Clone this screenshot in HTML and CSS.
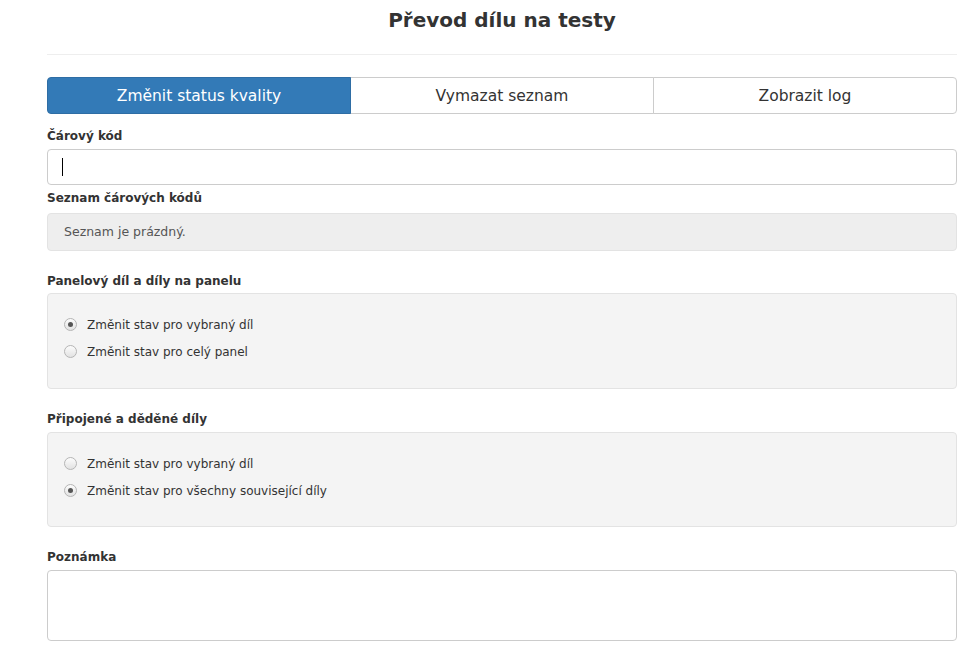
FILE: index.html
```html
<!DOCTYPE html>
<html lang="cs">
<head>
<meta charset="utf-8">
<link rel="stylesheet" href="styles.css">
</head>
<body>
<div class="page">
  <h1 class="title">Převod dílu na testy</h1>
  <hr class="rule">
  <div class="btn-group">
    <button class="btn btn-primary">Změnit status kvality</button>
    <button class="btn">Vymazat seznam</button>
    <button class="btn">Zobrazit log</button>
  </div>
  <label class="lbl lbl-first">Čárový kód</label>
  <div class="input"><span class="caret"></span></div>
  <label class="lbl lbl-tight">Seznam čárových kódů</label>
  <div class="empty">Seznam je prázdný.</div>
  <label class="lbl lbl-section lbl-section-1">Panelový díl a díly na panelu</label>
  <div class="panel panel-1">
    <div class="radio"><span class="dot checked"></span>Změnit stav pro vybraný díl</div>
    <div class="radio"><span class="dot"></span>Změnit stav pro celý panel</div>
  </div>
  <label class="lbl lbl-section">Připojené a děděné díly</label>
  <div class="panel">
    <div class="radio"><span class="dot"></span>Změnit stav pro vybraný díl</div>
    <div class="radio"><span class="dot checked"></span>Změnit stav pro všechny související díly</div>
  </div>
  <label class="lbl lbl-section">Poznámka</label>
  <div class="textarea"></div>
</div>
</body>
</html>
```
FILE: styles.css
```css
* { box-sizing: border-box; }
html, body { margin: 0; padding: 0; background: #fff; }
body {
  font-family: "DejaVu Sans", Verdana, sans-serif;
  color: #333;
  font-size: 13px;
}
.page {
  width: 910px;
  margin-left: 47px;
}
.title {
  margin: 0;
  padding-top: 8px;
  height: 42px;
  text-align: center;
  font-size: 20px;
  font-weight: bold;
  line-height: 24px;
  color: #333;
}
.rule {
  margin: 12px 0 0;
  border: 0;
  border-top: 1px solid #eee;
}
.btn-group {
  display: flex;
  margin-top: 22px;
  height: 37px;
}
.btn {
  flex: 1;
  font-family: inherit;
  font-size: 15.5px;
  color: #333;
  background: #fff;
  border: 1px solid #ccc;
  margin: 0;
  padding: 0;
  margin-left: -1px;
}
.btn:first-child { margin-left: 0; border-radius: 4px 0 0 4px; }
.btn:last-child { border-radius: 0 4px 4px 0; }
.btn-primary {
  background: #337ab7;
  border-color: #2e6da4;
  color: #fff;
  position: relative;
}
.lbl {
  display: block;
  font-weight: bold;
  font-size: 12px;
  line-height: 16px;
  color: #333;
}
.lbl-first { margin-top: 14px; margin-bottom: 5px; }
.lbl-tight { margin-top: 5px; margin-bottom: 7px; }
.lbl-section { margin-top: 22px; margin-bottom: 5px; }
.lbl-section-1 { margin-bottom: 4px; }
.input {
  height: 36px;
  border: 1px solid #ccc;
  border-radius: 4px;
  display: flex;
  align-items: center;
  padding-left: 14px;
}
.caret {
  width: 1px;
  height: 18px;
  background: #000;
}
.empty {
  height: 38px;
  background: #eee;
  border: 1px solid #e3e3e3;
  border-radius: 4px;
  padding-left: 16px;
  line-height: 36px;
  font-size: 12.5px;
  color: #555;
}
.panel {
  background: #f4f4f4;
  border: 1px solid #e3e3e3;
  border-radius: 4px;
  height: 95px;
  padding: 17px 0 0 16px;
}
.panel-1 { height: 96px; }
.radio {
  display: flex;
  align-items: center;
  height: 27px;
  font-size: 12px;
  color: #333;
}
.dot {
  width: 13px;
  height: 13px;
  border-radius: 50%;
  border: 1px solid #b5b5b5;
  background: linear-gradient(#fcfcfc, #e2e2e2);
  margin-right: 10px;
  position: relative;
  flex: none;
}
.dot.checked::after {
  content: "";
  position: absolute;
  left: 3px; top: 3px;
  width: 5px; height: 5px;
  border-radius: 50%;
  background: #555;
}
.textarea {
  height: 71px;
  border: 1px solid #ccc;
  border-radius: 4px;
  background: #fff;
}
```
